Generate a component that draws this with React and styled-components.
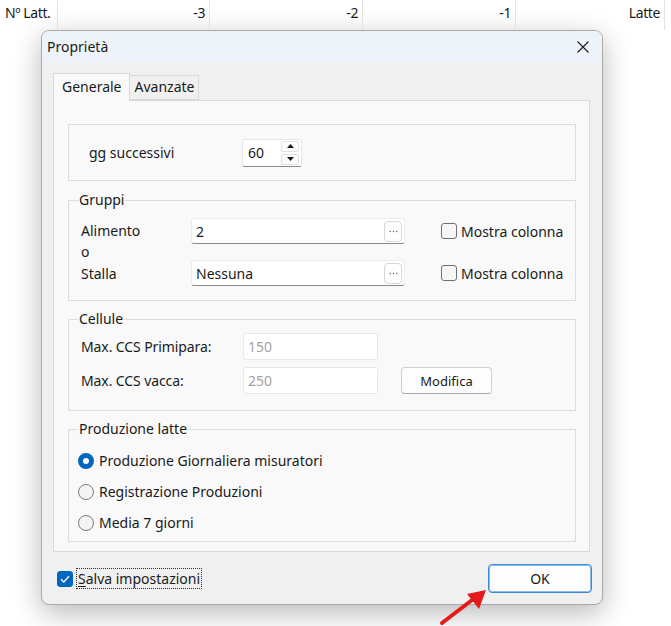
import React from 'react';
import styled, { createGlobalStyle } from 'styled-components';

const GlobalStyle = createGlobalStyle`
  html, body {
    margin: 0;
    padding: 0;
    background: #ffffff;
  }
  body {
    font-family: "Noto Sans", "Open Sans", sans-serif;
    color: #1a1a1a;
  }
`

const Page = styled('div')`
  position: relative;
  width: 671px;
  height: 626px;
  overflow: hidden;
  background: #ffffff;
`

const HeaderRow = styled('div')`
  display: grid;
  grid-template-columns: 58px 152px 153px 153px 149px;
  height: 30px;
`

const HeaderCell = styled('div')`
  display: flex;
  align-items: flex-start;
  justify-content: ${props => props.left ? 'flex-start' : 'flex-end'};
  padding: 3px 4px 0 5px;
  border-right: 1px solid #e3e3e3;
  font-size: 14px;
  letter-spacing: -0.4px;
  color: #1a1a1a;
`

const Dialog = styled('div')`
  margin-left: 41px;
  width: 562px;
  height: 575px;
  box-sizing: border-box;
  border: 1px solid #a9a9a9;
  border-radius: 8px;
  background: #f0f0f0;
  box-shadow: 0 8px 28px rgba(0, 0, 0, 0.28);
  overflow: hidden;
  display: flex;
  flex-direction: column;
`

const TitleBar = styled('div')`
  height: 31px;
  display: flex;
  align-items: center;
  justify-content: space-between;
  padding: 0 13px 0 5px;
  background: #eef2f9;
  font-size: 14px;
`

const CloseIcon = styled('svg')`
  width: 12px;
  height: 12px;
`

const Body = styled('div')`
  flex: 1;
  display: flex;
  flex-direction: column;
  padding: 11px 12px 0 11px;
`

const TabStrip = styled('div')`
  display: flex;
  align-items: flex-end;
  height: 27px;
`

const Tab = styled('div')`
  box-sizing: border-box;
  height: ${props => props.active ? '28px' : '25px'};
  margin-bottom: ${props => props.active ? '-1px' : '0'};
  padding: ${props => props.active ? '3px 7px 0 8px' : '1px 4px 0 5px'};
  border: 1px solid #d9d9d9;
  border-bottom: ${props => props.active ? 'none' : '1px solid #d9d9d9'};
  border-left: ${props => props.active ? '1px solid #d9d9d9' : 'none'};
  background: ${props => props.active ? '#f9f9f9' : '#f0f0f0'};
  font-size: 14px;
  position: relative;
  z-index: ${props => props.active ? 1 : 0};
`

const TabPanel = styled('div')`
  box-sizing: border-box;
  height: 452px;
  border: 1px solid #d9d9d9;
  background: #f9f9f9;
  padding: 23px 13px 0 14px;
  display: flex;
  flex-direction: column;
`

const PlainGroup = styled('div')`
  box-sizing: border-box;
  height: 57px;
  border: 1px solid #dcdcdc;
  display: flex;
  align-items: center;
  padding: 0 20px;
`

const Group = styled('fieldset')`
  margin: ${props => props.gap || 10}px 0 0 0;
  min-width: 0;
  border: 1px solid #dcdcdc;
  padding: ${props => props.pad || '0 10px'};
  box-sizing: border-box;
  height: ${props => props.h}px;
`

const Legend = styled('legend')`
  margin-left: 0;
  padding: 0 1px;
  font-size: 14px;
  line-height: 18px;
`

const Label = styled('span')`
  font-size: 14px;
  width: ${props => props.w || 'auto'};
  flex: none;
`

const SpinBox = styled('div')`
  display: flex;
  align-items: center;
  box-sizing: border-box;
  width: 60px;
  height: 28px;
  background: #ffffff;
  border: 1px solid #e6e6e6;
  border-bottom: 1px solid #8a8a8a;
  border-radius: 3px;
  padding: 0 2px 0 5px;
`

const SpinValue = styled('span')`
  flex: 1;
  font-size: 14px;
`

const SpinButtons = styled('div')`
  display: flex;
  flex-direction: column;
  gap: 2px;
`

const SpinBtn = styled('div')`
  width: 18px;
  height: 11px;
  box-sizing: border-box;
  border: 1px solid #e0e0e0;
  border-radius: 2px;
  background: #fdfdfd;
  display: flex;
  align-items: center;
  justify-content: center;
`

const GroupGrid = styled('div')`
  display: grid;
  grid-template-columns: 110px 214px auto;
  grid-auto-rows: 26px;
  row-gap: 16px;
  align-items: center;
  padding: 9px 0 0 3px;
`

const WrapLabel = styled('div')`
  height: 26px;
  font-size: 14px;
  line-height: 21px;
  padding-top: 2px;
  box-sizing: border-box;
  width: 70px;
  align-self: start;
`

const TextInput = styled('div')`
  box-sizing: border-box;
  height: ${props => props.h || 26}px;
  width: ${props => props.w ? props.w + 'px' : 'auto'};
  display: flex;
  align-items: center;
  justify-content: space-between;
  padding: 0 2px 0 4px;
  background: #ffffff;
  border: 1px solid ${props => props.disabled ? '#e8e8e8' : '#ececec'};
  border-bottom: 1px solid ${props => props.disabled ? '#e8e8e8' : '#8a8a8a'};
  border-radius: 3px;
  font-size: 14px;
  color: ${props => props.disabled ? '#a3a3a3' : '#1a1a1a'};
`

const EllipsisBtn = styled('div')`
  width: 18px;
  height: 21px;
  box-sizing: border-box;
  border: 1px solid #d6d6d6;
  border-radius: 4px;
  background: #ffffff;
  display: flex;
  align-items: center;
  justify-content: center;
`

const CheckRow = styled('label')`
  display: flex;
  align-items: center;
  gap: 4px;
  margin-left: 36px;
  font-size: 14px;
`

const CheckBox = styled('span')`
  width: 16px;
  height: 16px;
  box-sizing: border-box;
  border-radius: 3px;
  border: 1px solid ${props => props.checked ? '#0067c0' : '#6f6f6f'};
  background: ${props => props.checked ? '#0067c0' : '#f6f6f6'};
  display: inline-flex;
  align-items: center;
  justify-content: center;
  flex: none;
`

const CelluleGrid = styled('div')`
  display: grid;
  grid-template-columns: 162px 135px auto;
  grid-auto-rows: 27px;
  row-gap: 7px;
  align-items: center;
  padding: 5px 0 0 3px;
`

const SmallLabel = styled('span')`
  font-size: 14px;
  letter-spacing: -0.1px;
`

const Button = styled('div')`
  box-sizing: border-box;
  width: ${props => props.w}px;
  height: ${props => props.h}px;
  margin-left: ${props => props.ml || 0}px;
  margin-right: ${props => props.mr || 0}px;
  display: flex;
  align-items: center;
  justify-content: center;
  background: #fdfdfd;
  border: 1px solid ${props => props.primary ? '#3c8ad8' : '#d0d0d0'};
  border-bottom-color: ${props => props.primary ? '#3c8ad8' : '#a8a8a8'};
  border-radius: 4px;
  box-shadow: ${props => props.primary ? 'inset 0 0 0 1px #8dbbea' : 'none'};
  font-size: ${props => props.fs || 13}px;
`

const RadioRow = styled('label')`
  display: flex;
  align-items: center;
  gap: 5px;
  height: 31px;
  font-size: 14px;
`

const Radio = styled('span')`
  width: 16px;
  height: 16px;
  box-sizing: border-box;
  border-radius: 50%;
  flex: none;
  border: ${props => props.checked ? '5px solid #0067c0' : '1px solid #7a7a7a'};
  background: ${props => props.checked ? '#ffffff' : '#f4f4f4'};
`

const Footer = styled('div')`
  display: flex;
  align-items: center;
  justify-content: space-between;
  padding: 12px 0 0 4px;
`

const FocusLabel = styled('label')`
  display: flex;
  align-items: center;
  gap: 3px;
  font-size: 14px;
`

const FocusText = styled('span')`
  border: 1px dotted #333;
  padding: 0 1px;
  line-height: 19px;
`

const AccessKey = styled('span')`
  text-decoration: underline;
  text-underline-offset: 2px;
`

const ArrowSvg = styled('svg')`
  position: absolute;
  left: 436px;
  top: 582px;
  width: 56px;
  height: 44px;
`

function Check() {
  return (
    <svg width="10" height="8" viewBox="0 0 10 8">
      <path d="M1 4.2 L3.8 7 L9 1.2" fill="none" stroke="#ffffff" strokeWidth="1.3" />
    </svg>
  )
}

function Dots() {
  return (
    <svg width="9" height="3" viewBox="0 0 9 3">
      <circle cx="1.2" cy="1.5" r="0.7" fill="#555" />
      <circle cx="4.5" cy="1.5" r="0.7" fill="#555" />
      <circle cx="7.8" cy="1.5" r="0.7" fill="#555" />
    </svg>
  )
}

function Tri({ up }) {
  return (
    <svg width="7" height="4" viewBox="0 0 7 4">
      <path d={up ? 'M0 4 L3.5 0 L7 4 Z' : 'M0 0 L3.5 4 L7 0 Z'} fill="#1a1a1a" />
    </svg>
  )
}

export default function App() {
  return (
    <Page>
      <GlobalStyle />
      <HeaderRow>
        <HeaderCell left>Nº Latt.</HeaderCell>
        <HeaderCell>-3</HeaderCell>
        <HeaderCell>-2</HeaderCell>
        <HeaderCell>-1</HeaderCell>
        <HeaderCell>Latte</HeaderCell>
      </HeaderRow>

      <Dialog>
        <TitleBar>
          <span>Proprietà</span>
          <CloseIcon viewBox="0 0 12 12">
            <path d="M0.5 0.5 L11.5 11.5 M11.5 0.5 L0.5 11.5" stroke="#1a1a1a" strokeWidth="1.1" />
          </CloseIcon>
        </TitleBar>

        <Body>
          <TabStrip>
            <Tab active>Generale</Tab>
            <Tab>Avanzate</Tab>
          </TabStrip>

          <TabPanel>
            <PlainGroup>
              <Label w="153px">gg successivi</Label>
              <SpinBox>
                <SpinValue>60</SpinValue>
                <SpinButtons>
                  <SpinBtn><Tri up /></SpinBtn>
                  <SpinBtn><Tri /></SpinBtn>
                </SpinButtons>
              </SpinBox>
            </PlainGroup>

            <Group gap={10} h={110} pad="0 10px 0 9px">
              <Legend>Gruppi</Legend>
              <GroupGrid>
                <WrapLabel>Alimento o</WrapLabel>
                <TextInput>2<EllipsisBtn><Dots /></EllipsisBtn></TextInput>
                <CheckRow><CheckBox />Mostra colonna</CheckRow>
                <Label>Stalla</Label>
                <TextInput>Nessuna<EllipsisBtn><Dots /></EllipsisBtn></TextInput>
                <CheckRow><CheckBox />Mostra colonna</CheckRow>
              </GroupGrid>
            </Group>

            <Group gap={9} h={101} pad="0 10px 0 9px">
              <Legend>Cellule</Legend>
              <CelluleGrid>
                <SmallLabel>Max. CCS Primipara:</SmallLabel>
                <TextInput disabled w={135} h={27}>150</TextInput>
                <span />
                <SmallLabel>Max. CCS vacca:</SmallLabel>
                <TextInput disabled w={135} h={27}>250</TextInput>
                <Button w={91} h={27} ml={23}>Modifica</Button>
              </CelluleGrid>
            </Group>

            <Group gap={9} h={122} pad="7px 10px 0 9px">
              <Legend>Produzione latte</Legend>
              <RadioRow><Radio checked />Produzione Giornaliera misuratori</RadioRow>
              <RadioRow><Radio />Registrazione Produzioni</RadioRow>
              <RadioRow><Radio />Media 7 giorni</RadioRow>
            </Group>
          </TabPanel>

          <Footer>
            <FocusLabel>
              <CheckBox checked><Check /></CheckBox>
              <FocusText><AccessKey>S</AccessKey>alva impostazioni</FocusText>
            </FocusLabel>
            <Button primary w={104} h={29} fs={14} mr={-2}>OK</Button>
          </Footer>
        </Body>
      </Dialog>

      <ArrowSvg viewBox="0 0 56 44">
        <path d="M6 41 L40 15" stroke="#e41b1b" strokeWidth="4" strokeLinecap="round" />
        <path d="M50 8 L31 12 L43 27 Z" fill="#e41b1b" />
      </ArrowSvg>
    </Page>
  )
}
